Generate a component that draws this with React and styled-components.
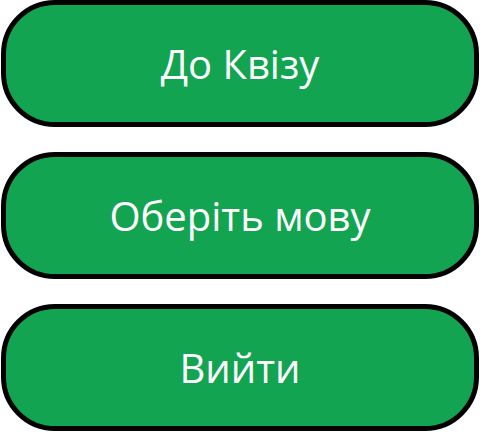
import React from 'react';
import styled, { createGlobalStyle } from 'styled-components';

const GlobalStyle = createGlobalStyle`
  html, body {
    margin: 0;
    padding: 0;
    background: #ffffff;
  }
  body {
    font-family: "Open Sans", "Noto Sans", sans-serif;
  }
`;

const Menu = styled.div`
  display: flex;
  flex-direction: column;
  gap: 25px;
  padding: 0 1px;
`;

const MenuButton = styled.button`
  box-sizing: border-box;
  width: 100%;
  height: 127px;
  background-color: #13a452;
  border: 5px solid #000000;
  border-radius: 54px;
  color: #ffffff;
  font-family: "Open Sans", "Noto Sans", sans-serif;
  font-size: 40px;
  font-weight: 400;
  display: flex;
  align-items: center;
  justify-content: center;
  padding: 0;
  cursor: pointer;
`;

const items = ['До Квізу', 'Оберіть мову', 'Вийти'];

export default function App() {
  return (
    <>
      <GlobalStyle />
      <Menu>
        {items.map((label) => (
          <MenuButton key={label}>{label}</MenuButton>
        ))}
      </Menu>
    </>
  );
}
